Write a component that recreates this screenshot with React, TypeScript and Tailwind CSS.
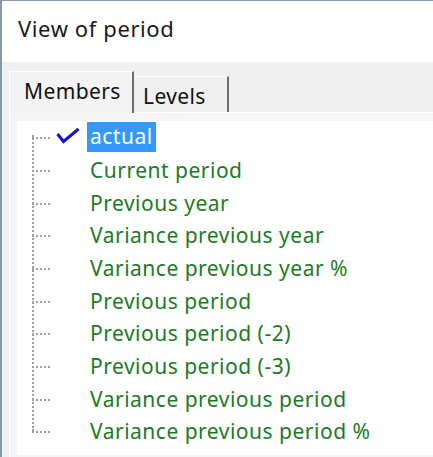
import React from 'react';

const items = [
  'actual',
  'Current period',
  'Previous year',
  'Variance previous year',
  'Variance previous year %',
  'Previous period',
  'Previous period (-2)',
  'Previous period (-3)',
  'Variance previous period',
  'Variance previous period %',
];

const font = { fontFamily: '"Noto Sans", "Open Sans", sans-serif' };

const CheckMark = () => (
  <svg width="24" height="18" viewBox="0 0 24 18" className="absolute left-[39px] top-[6px]">
    <path d="M1.5 7 L7.5 14.5 L22.5 2" fill="none" stroke="#1414d4" strokeWidth="3" strokeLinejoin="miter" />
  </svg>
);

export default function App() {
  return (
    <div className="w-[433px] h-[457px] overflow-hidden bg-[#f0f0f0] border-l-2 border-t border-[#8a98ad] flex flex-col" style={font}>
      {/* header */}
      <div className="h-[61px] bg-white pl-[16px] pt-[12px] text-[22px] tracking-[0.6px] text-[#1a1a1a] leading-[30px]">View of period</div>

      {/* tab area */}
      <div className="flex-1 flex flex-col pl-[7px] pt-[9px]">
        <div className="flex items-end h-[42px]">
          <div className="relative z-10 h-[42px] w-[125px] bg-[#f3f3f3] border-l border-t border-white border-r-2 border-r-[#6e6e6e] pl-[14px] pt-[5px] text-[21px] tracking-[0.4px] text-[#111] leading-[28px]">
            Members
          </div>
          <div className="h-[37px] w-[94px] ml-[1px] bg-[#f0f0f0] border-t border-white border-r-2 border-r-[#6e6e6e] pl-[8px] pt-[4px] text-[21px] tracking-[0.4px] text-[#111] leading-[30px]">
            Levels
          </div>
        </div>
        <div className="flex-1 border-t border-l border-white bg-[#f5f5f5] pl-[7px] pt-[8px] pb-[2px] -mt-[1px]">
          <div className="h-full bg-white relative">
            {/* dotted vertical line */}
            <div className="absolute left-[15px] top-[14px] h-[296px] border-l-2 border-dotted border-[#a0a0a0]" />
            {items.map((label, i) => (
              <div key={label} className="relative h-[32.67px] flex items-center">
                <div className="absolute left-[15px] top-1/2 w-[18px] border-t-2 border-dotted border-[#a0a0a0]" />
                {i === 0 && <CheckMark />}
                {i === 0 ? (
                  <span className="ml-[70px] px-[3px] h-[30px] bg-[#3399ff] text-white text-[21px] tracking-[0.5px] leading-[29px]">{label}</span>
                ) : (
                  <span className="ml-[73px] text-[#1c7a26] text-[21px] tracking-[0.5px] leading-[30px]">{label}</span>
                )}
              </div>
            ))}
          </div>
        </div>
      </div>
    </div>
  );
}
